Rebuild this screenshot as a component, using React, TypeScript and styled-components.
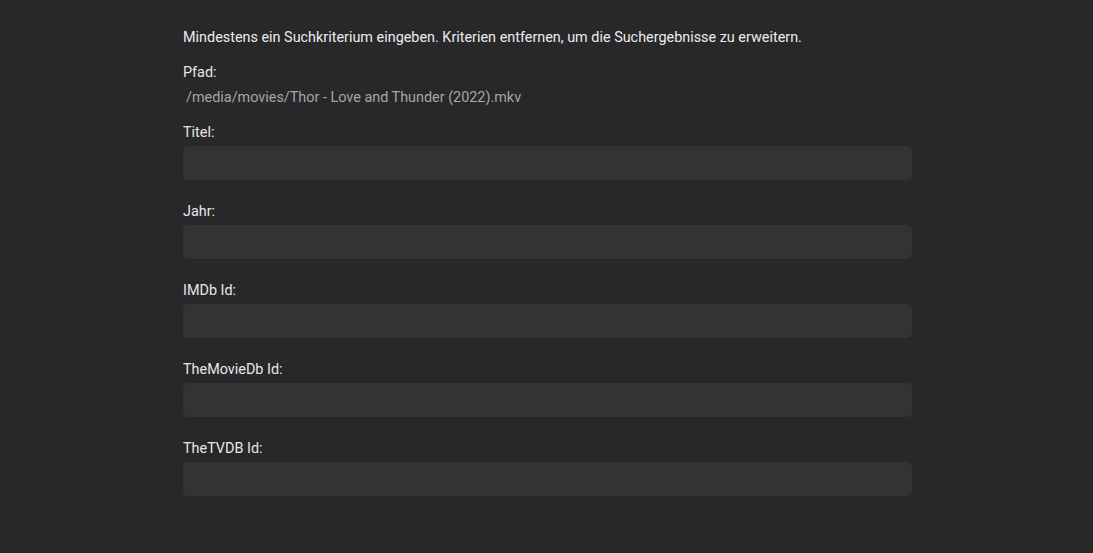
import React from "react";
import styled, { createGlobalStyle } from "styled-components";

const Global = createGlobalStyle`
  html, body { margin: 0; padding: 0; background: #28282a; }
  body { font-family: Roboto, "Noto Sans", sans-serif; color: #e8e8e8; }
`;

const Page = styled.div`
  width: 1093px;
  height: 553px;
  background: #28282a;
  display: flex;
  justify-content: center;
  padding-left: 2px;
  box-sizing: border-box;
`;

const Form = styled.div`
  width: 729px;
  padding-top: 28px;
  display: flex;
  flex-direction: column;
`;

const Intro = styled.p`
  margin: 0 0 15px;
  font-size: 14.4px;
  line-height: 20px;
  color: #ececec;
`;

const Label = styled.div`
  font-size: 14.4px;
  line-height: 20px;
  color: #e6e6e6;
`;

const PathText = styled.div`
  font-size: 14.4px;
  line-height: 20px;
  color: #a6a6a6;
  margin: 5px 0 15px;
  padding-left: 3px;
`;

const Field = styled.div`
  display: flex;
  flex-direction: column;
  gap: 3px;
  margin-bottom: 22px;
`;

const Input = styled.input`
  height: 34px;
  box-sizing: border-box;
  border: none;
  border-radius: 5px;
  background: #333335;
  color: #eee;
  font-family: inherit;
  font-size: 14px;
  padding: 0 10px;
  outline: none;
`;

const fields = ["Titel:", "Jahr:", "IMDb Id:", "TheMovieDb Id:", "TheTVDB Id:"];

export default function App() {
  return (
    <Page>
      <Global />
      <Form>
        <Intro>
          Mindestens ein Suchkriterium eingeben. Kriterien entfernen, um die Suchergebnisse zu erweitern.
        </Intro>
        <Label>Pfad:</Label>
        <PathText>/media/movies/Thor - Love and Thunder (2022).mkv</PathText>
        {fields.map((f) => (
          <Field key={f}>
            <Label>{f}</Label>
            <Input type="text" />
          </Field>
        ))}
      </Form>
    </Page>
  );
}
